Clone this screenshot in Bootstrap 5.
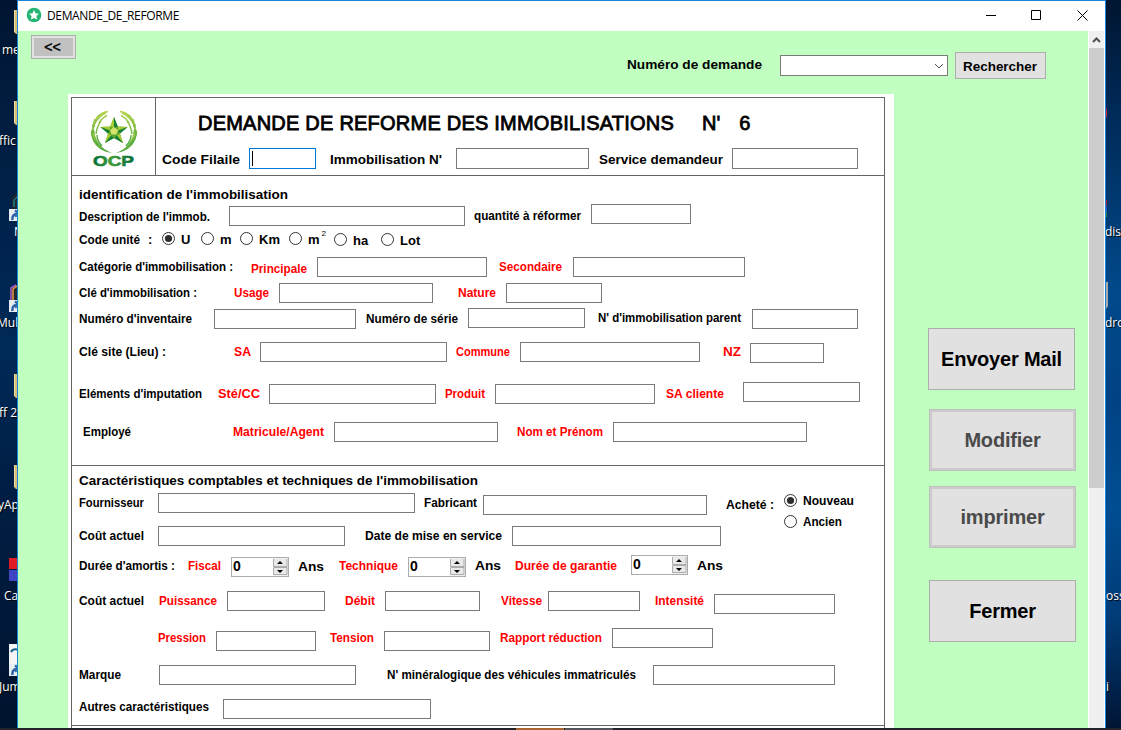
<!DOCTYPE html>
<html lang="fr">
<head>
<meta charset="utf-8">
<title>DEMANDE_DE_REFORME</title>
<link href="https://cdn.jsdelivr.net/npm/bootstrap@5.3.0/dist/css/bootstrap.min.css" rel="stylesheet">
<style>
body{height:730px;overflow:hidden;font-family:"Liberation Sans",Arial,sans-serif;font-size:13px;color:#000;background:#011b3d}
.app{height:728px;overflow:hidden}
.desk{position:relative;overflow:hidden;flex:none;color:#fff;font:12px/16px "Open Sans",sans-serif;text-shadow:1px 1px 1px #000}
.desk.west{width:17px;background:linear-gradient(#001531,#011e42 18%,#00244f 35%,#002a58 48%,#001f46 65%,#00132e)}
.desk.east{width:15px;background:linear-gradient(#001530,#002855 14%,#00498a 40%,#004384 55%,#004d92 70%,#003b76 85%,#001534)}
.desk span,.desk svg{position:absolute;white-space:nowrap}
.win{width:1089px;border:1px solid #1883d7;border-bottom:0;background:#fff}
.titlebar{height:30px;font:12px "Open Sans",sans-serif;padding:0 3px 2px 8px}
.titlebar svg{display:block}
.titlebar .fit{margin-left:5px}
.client{width:1070px;background:#c0ffc0;height:697px}
.topbar{height:63px}
.scroll{width:15px;margin-left:1px;background:#f0f0f0}
.thumb{height:440px;background:#cdcdcd}
.win-btn{border:1px solid #adadad;background:#e1e1e1;border-radius:0;color:#000;font-weight:700;padding:0}
.btn-back{width:45px;height:24px;margin:4px 0 0 13px;background:#c0c0c0;box-shadow:inset 0 0 0 2px #e1e1e1;font-size:14px;font-weight:400;-webkit-text-stroke:.5px #000;line-height:22px;padding-right:2px}
.search{margin:21px 42px 0 0}
.search .lbl{margin:3px 18px 0 0}
.btn-find{width:91px;height:27px;margin-left:7px;font-size:13px;line-height:27px;text-align:left;padding-left:7px}
.combo{width:168px;height:21px;margin-top:3px;border:1px solid #7a7a7a;background:#fff;padding:7px 3px 0 0}
.combo svg{display:block;margin-left:auto}
.actions .win-btn{width:147px;height:62px;font-size:20px;line-height:60px;margin-left:35px;letter-spacing:-.2px}
.actions .mail{margin:234px 0 19px 34px}
.actions .print{margin-top:15px}
.actions .quit{margin-top:32px}
.actions .off{color:#4a4a4a;border-color:#bfbfbf;box-shadow:inset 0 0 0 2px #ccc}
.sheet{width:826px;margin-left:50px;background:#fff;padding:3px}
.frame{width:814px;height:640px;border:1px solid #646464;border-bottom:0}
.head{height:78px;border-bottom:1px solid #646464}
.logo{width:84px;border-right:1px solid #646464;flex:none}
.logo svg{display:block;margin:9px 0 0 14px}
.big{font-size:20px;font-weight:400;-webkit-text-stroke:.8px #000;line-height:24px;margin:13px 0 0;padding-left:42px}
.big span{display:inline-block;white-space:nowrap}
.big .num{margin:0 19px 0 28px}
.lbl{display:block;font-weight:700;line-height:20px;height:20px;white-space:nowrap}
.lbl>span{display:inline-block}
.lbl .fit,.opt .fit,.win-btn .fit{transform-origin:0 50%}
.red{color:#f00}
.box{display:block;border:1px solid #7a7a7a;background:#fff;height:20px;border-radius:0;padding:0 2px;min-width:0;width:100%}
.tall{height:21px}
.box.active{border-color:#0078d7;padding:2px 0 0 2px}
.caret{width:1px;height:15px;background:#000}
.line{display:grid;align-items:start}
.sec1{height:290px;border-bottom:1px solid #646464;padding:9px 0 0 7px}
.sec2{height:260px;border-bottom:1px solid #646464;padding:5px 0 0 7px}
.d1{margin-top:1px}.d2{margin-top:2px}.d3{margin-top:3px}.u1{margin-top:-1px}.u2{margin-top:-2px}
.r-head{grid-template-columns:87px 67px 14px 126px 133px 10px 133px 126px;padding-left:6px;margin-top:13px}
.r-title{height:21px}.sec2 .r-title{height:22px}
.r-desc{grid-template-columns:150px 236px 9px 117px 100px;height:24px}
.r-unit{grid-template-columns:83px 39px 39px 49px 45px 47px 60px;height:27px}
.r-cat{grid-template-columns:172px 66px 170px 12px 74px 172px;height:26px}
.r-cle{grid-template-columns:155px 45px 154px 25px 48px 96px;height:26px}
.r-inv{grid-template-columns:135px 142px 10px 102px 117px 13px 154px 106px;height:33px}
.r-site{grid-template-columns:155px 26px 187px 9px 64px 180px 23px 27px 74px;height:42px}
.r-imp{grid-template-columns:139px 51px 167px 9px 50px 160px 11px 77px 117px;height:38px}
.r-emp{grid-template-columns:154px 101px 164px 19px 96px 194px;height:43px}
.r-four{grid-template-columns:79px 257px 9px 59px 224px 19px 58px 90px;height:33px}
.r-date{grid-template-columns:79px 187px 20px 147px 209px;height:30px}
.r-dur{grid-template-columns:109px 43px 58px 9px 41px 69px 58px 9px 40px 116px 57px 9px 40px;height:35px}
.r-puis{grid-template-columns:80px 68px 98px 20px 40px 95px 21px 47px 92px 15px 59px 121px;height:37px}
.r-pres{grid-template-columns:79px 58px 100px 14px 54px 106px 10px 112px 101px;height:37px}
.r-marq{grid-template-columns:80px 197px 31px 266px 182px;height:32px}
.r-autr{grid-template-columns:144px 208px}
.opt{display:flex;gap:6px;line-height:20px;font-weight:700}
.opt svg{flex:none;margin-top:2px}
.bought svg{margin-top:3px}
.sup{font-size:8px;font-weight:400;line-height:8px;margin:0 0 0 -4px}
.spin{display:flex;justify-content:space-between;height:20px;border:1px solid #ababb0;background:#fff;font-size:14px;font-weight:700;line-height:16px;padding-left:1px}
.taskbar{height:2px;background:#222427;padding-left:516px}
.taskbar i{width:48px;background:#a9672f;margin-right:1px}
.taskbar i+i{background:#55575b}
</style>
</head>
<body>
<svg width="0" height="0" class="position-absolute">
 <defs>
  <symbol id="on" viewBox="0 0 13 13"><circle cx="6.5" cy="6.5" r="6" fill="#fff" stroke="#333"/><circle cx="6.5" cy="6.5" r="3.6" fill="#2d2d2d"/></symbol>
  <symbol id="off" viewBox="0 0 13 13"><circle cx="6.5" cy="6.5" r="6" fill="#fff" stroke="#333"/></symbol>
  <symbol id="updown" viewBox="0 0 15 18"><path fill="#f0f0f0" d="M0 0h15v18H0z"/><path fill="#e9e9e9" stroke="#acacac" d="M.5 1v7.500h13.500V1M.5 10v6.500h13.500V10"/><path d="M.5 9.500h14" stroke="#acacac"/><path d="M7 3l3 3H4zM4 12h6l-3 3z"/></symbol>
  <symbol id="folder" viewBox="0 0 14 24"><path fill="#d8bd78" d="M1 0h13v24H3L1 22z"/><path fill="#f0dda0" d="M1 0h1v22H1z"/></symbol>
  <symbol id="arrow" viewBox="0 0 12 12"><path fill="#e8edf2" d="M0 0h12v12H0z"/><path fill="none" stroke="#2c62a6" stroke-width="2.500" d="M3.500 11c-.5-4 1-6 5-6M6 1.500l4 3-4 3"/></symbol>
 </defs>
</svg>
<div class="app d-flex">
 <div class="desk west">
  <svg style="left:13px;top:10px" width="14" height="24"><use href="#folder"/></svg><span style="left:2px;top:42px">me</span>
  <svg style="left:13px;top:101px" width="14" height="24"><use href="#folder"/></svg><span style="left:-1px;top:133px">ffic</span>
  <svg style="left:9px;top:191px" width="14" height="30" viewBox="0 0 14 30"><path d="M3 6l5-4v18H3z" fill="#23262b"/><path d="M5 16V9l3-3" stroke="#15a8b8" fill="none"/><svg y="18" width="12" height="12"><use href="#arrow"/></svg></svg><span style="left:14px;top:224px">N</span>
  <svg style="left:9px;top:282px" width="14" height="30" viewBox="0 0 14 30"><path d="M1 6l7-4v18H1z" fill="#23262b"/><path d="M2 18V6l5-3" stroke="#a05bd0" fill="none" stroke-width="1.500"/><path d="M4 18V7l4-3" stroke="#e79a3b" fill="none" stroke-width="1.500"/><svg y="18" width="12" height="12"><use href="#arrow"/></svg></svg><span style="left:-3px;top:315px">Mul</span>
  <svg style="left:13px;top:374px" width="14" height="24"><use href="#folder"/></svg><span style="left:-1px;top:405px">ff 20</span>
  <svg style="left:13px;top:465px" width="14" height="24"><use href="#folder"/></svg><span style="left:-2px;top:497px">yAp</span>
  <svg style="left:9px;top:558px" width="12" height="23"><path fill="#e01b24" d="M0 0h12v11H0z"/><path fill="#4044c4" d="M0 12h12v11H0z"/></svg><span style="left:4px;top:588px">Ca</span>
  <svg style="left:9px;top:644px" width="12" height="32"><path fill="#f4f4f4" d="M0 0h12v20H0z"/><path d="M2 8q2-4 8-2" stroke="#17618e" stroke-width="2" fill="none"/><svg y="20" width="12" height="12"><use href="#arrow"/></svg></svg><span style="left:-1px;top:679px">Jum</span>
 </div>
 <div class="win d-flex flex-column flex-shrink-0">
  <div class="titlebar d-flex align-items-center">
   <svg width="16" height="16" viewBox="0 0 16 16"><circle cx="8" cy="8" r="7.300" fill="#25b574"/><path fill="#fff" d="M8 3l1.500 3.300 3.500.4-2.600 2.400.7 3.500L8 10.900l-3.100 1.700.7-3.500L3 6.700l3.500-.4z"/></svg>
   <span class="fit" data-w="131">DEMANDE_DE_REFORME</span>
   <svg class="ms-auto" width="120" height="14" viewBox="0 0 120 14" fill="none" stroke="#000"><path d="M4 7.500h10M49.500 2.500h9v9h-9zM95.500 2.500l10 10M105.500 2.500l-10 10"/></svg>
  </div>
  <div class="d-flex">
   <div class="client">
    <div class="topbar d-flex align-items-start">
     <button class="btn win-btn btn-back">&lt;&lt;</button>
     <div class="search d-flex ms-auto">
      <span class="lbl"><span class="fit" data-w="135">Numéro de demande</span></span>
      <div class="combo"><svg width="10" height="6" fill="none" stroke="#555"><path d="M1 1l4 4 4-4"/></svg></div>
      <button class="btn win-btn btn-find"><span class="fit d-inline-block" data-w="74">Rechercher</span></button>
     </div>
    </div>
    <div class="d-flex">
     <div class="sheet">
      <div class="frame">
       <div class="head d-flex">
        <div class="logo">
         <svg width="56" height="64" viewBox="0 0 56 64">
          <defs><linearGradient id="g" x2="0" y2="1"><stop stop-color="#b4d24a"/><stop offset="1" stop-color="#45a53c"/></linearGradient><linearGradient id="t" x2="1" y2="0"><stop stop-color="#00703c"/><stop offset=".45" stop-color="#3f9c36"/><stop offset="1" stop-color="#086d39"/></linearGradient></defs>
          <g id="wreath">
           <path fill="url(#g)" d="M5.500 22C4 35 12 44 26 46 15 42 9 34 8 22z"/>
           <path fill="none" stroke="url(#g)" stroke-width="1.400" d="M6.500 28C6 18 12 9 20 6M7 17q-1 4 1 9M9 12q-2 4-.5 8M13 8q-4 4-3.500 8M22 4.500q-8 1-10 6M15 14q-4 5-5 13M21 8.500q-6 3-8 8M5.500 24q0 8 6.500 14M11 28q0 6 5 11"/>
          </g>
          <use href="#wreath" transform="matrix(-1 0 0 1 56 0)"/>
          <path fill="#5aa52e" d="M28 10l3.800 9.500 9.700.5-7.500 6.500 3 9.500-9-5-9 5 3-9.500-7.500-6.500 9.700-.5z"/>
          <path fill="#a8cc34" d="M28 10v11l-4-1.500zM41.500 20l-9 4-1-4.500zM14.500 20l10-.5-1 4zM22 26.500L19 36l6-8zM34 26.500L37 36l-9-5z"/>
          <path fill="#16803b" d="M28 10l3.800 9.500-3.800 1.500zM41.500 20L34 26.500l-2-3zM37 36l-9-5 3-2.500zM14.500 20l7.500 6.500 2-3zM19 36l9-5-3-2z"/>
          <path fill="#d5e36b" d="M28 20l4 3-1.500 4.500h-5L24 23z"/>
          <text x="7" y="59" textLength="41" lengthAdjust="spacingAndGlyphs" font-family="Liberation Sans" font-weight="700" font-size="15" fill="url(#t)" stroke="url(#t)" stroke-width=".6">OCP</text>
         </svg>
        </div>
        <div>
         <h1 class="big d-flex"><span class="fit" data-w="475">DEMANDE DE REFORME DES IMMOBILISATIONS</span><span class="num">N'</span><span>6</span></h1>
         <div class="line r-head">
          <span class="lbl d2"><span class="fit" data-w="78">Code Filaile</span></span><div class="box tall active"><div class="caret"></div></div><i></i>
          <span class="lbl d2"><span class="fit" data-w="112">Immobilisation N'</span></span><input class="box tall"><i></i>
          <span class="lbl d2"><span class="fit" data-w="124">Service demandeur</span></span><input class="box tall">
         </div>
        </div>
       </div>
       <div class="sec1">
        <div class="r-title"><span class="lbl"><span class="fit" data-w="209">identification de l'immobilisation</span></span></div>
        <div class="line r-desc"><span class="lbl d1"><span class="fit" data-w="131">Description de l'immob.</span></span><input class="box"><i></i><span class="lbl"><span class="fit" data-w="107">quantité à réformer</span></span><input class="box u2"></div>
        <div class="line r-unit"><span class="lbl"><span class="fit" data-w="61">Code unité</span><span class="ms-2">:</span></span>
         <label class="opt"><svg width="13" height="13"><use href="#on"/></svg>U</label>
         <label class="opt"><svg width="13" height="13"><use href="#off"/></svg>m</label>
         <label class="opt"><svg width="13" height="13"><use href="#off"/></svg>Km</label>
         <label class="opt"><svg width="13" height="13"><use href="#off"/></svg>m<span class="sup">2</span></label>
         <label class="opt d1"><svg width="13" height="13"><use href="#off"/></svg>ha</label>
         <label class="opt d1"><svg width="13" height="13"><use href="#off"/></svg>Lot</label></div>
        <div class="line r-cat"><span class="lbl"><span class="fit" data-w="154">Catégorie d'immobilisation :</span></span><span class="lbl red d2"><span class="fit" data-w="56">Principale</span></span><input class="box"><i></i><span class="lbl red"><span class="fit" data-w="63">Secondaire</span></span><input class="box"></div>
        <div class="line r-cle"><span class="lbl"><span class="fit" data-w="118">Clé d'immobilisation :</span></span><span class="lbl red"><span class="fit" data-w="35">Usage</span></span><input class="box"><i></i><span class="lbl red"><span class="fit" data-w="38">Nature</span></span><input class="box"></div>
        <div class="line r-inv"><span class="lbl"><span class="fit" data-w="113">Numéro d'inventaire</span></span><input class="box"><i></i><span class="lbl"><span class="fit" data-w="92">Numéro de série</span></span><input class="box u1"><i></i><span class="lbl u1"><span class="fit" data-w="143">N' d'immobilisation parent</span></span><input class="box"></div>
        <div class="line r-site"><span class="lbl"><span class="fit" data-w="87">Clé site (Lieu) :</span></span><span class="lbl red"><span class="fit" data-w="17">SA</span></span><input class="box"><i></i><span class="lbl red"><span class="fit" data-w="54">Commune</span></span><input class="box"><i></i><span class="lbl red"><span class="fit" data-w="18">NZ</span></span><input class="box d1"></div>
        <div class="line r-imp"><span class="lbl"><span class="fit" data-w="123">Eléments d'imputation</span></span><span class="lbl red"><span class="fit" data-w="42">Sté/CC</span></span><input class="box"><i></i><span class="lbl red"><span class="fit" data-w="40">Produit</span></span><input class="box"><i></i><span class="lbl red"><span class="fit" data-w="58">SA cliente</span></span><input class="box u2"></div>
        <div class="line r-emp"><span class="lbl ps-1"><span class="fit" data-w="48">Employé</span></span><span class="lbl red"><span class="fit" data-w="91">Matricule/Agent</span></span><input class="box"><i></i><span class="lbl red"><span class="fit" data-w="86">Nom et Prénom</span></span><input class="box"></div>
       </div>
       <div class="sec2">
        <div class="r-title"><span class="lbl"><span class="fit" data-w="399">Caractéristiques comptables et techniques de l'immobilisation</span></span></div>
        <div class="line r-four"><span class="lbl"><span class="fit" data-w="65">Fournisseur</span></span><input class="box"><i></i><span class="lbl"><span class="fit" data-w="53">Fabricant</span></span><input class="box d2"><i></i><span class="lbl d2"><span class="fit" data-w="48">Acheté :</span></span>
         <div class="u2 bought"><label class="opt"><svg width="13" height="13"><use href="#on"/></svg><span class="fit" data-w="51">Nouveau</span></label><label class="opt d1"><svg width="13" height="13"><use href="#off"/></svg><span class="fit" data-w="39">Ancien</span></label></div></div>
        <div class="line r-date"><span class="lbl"><span class="fit" data-w="65">Coût actuel</span></span><input class="box"><i></i><span class="lbl"><span class="fit" data-w="137">Date de mise en service</span></span><input class="box"></div>
        <div class="line r-dur"><span class="lbl"><span class="fit" data-w="96">Durée d'amortis :</span></span><span class="lbl red"><span class="fit" data-w="33">Fiscal</span></span><div class="spin d1">0<svg width="15" height="18"><use href="#updown"/></svg></div><i></i><span class="lbl d1"><span class="fit" data-w="26">Ans</span></span>
         <span class="lbl red"><span class="fit" data-w="59">Technique</span></span><div class="spin d1">0<svg width="15" height="18"><use href="#updown"/></svg></div><i></i><span class="lbl"><span class="fit" data-w="26">Ans</span></span>
         <span class="lbl red"><span class="fit" data-w="102">Durée de garantie</span></span><div class="spin u1">0<svg width="15" height="18"><use href="#updown"/></svg></div><i></i><span class="lbl"><span class="fit" data-w="26">Ans</span></span></div>
        <div class="line r-puis"><span class="lbl"><span class="fit" data-w="65">Coût actuel</span></span><span class="lbl red"><span class="fit" data-w="58">Puissance</span></span><input class="box"><i></i><span class="lbl red"><span class="fit" data-w="30">Débit</span></span><input class="box"><i></i><span class="lbl red"><span class="fit" data-w="41">Vitesse</span></span><input class="box"><i></i><span class="lbl red"><span class="fit" data-w="49">Intensité</span></span><input class="box d3"></div>
        <div class="line r-pres"><i></i><span class="lbl red"><span class="fit" data-w="48">Pression</span></span><input class="box d3"><i></i><span class="lbl red"><span class="fit" data-w="44">Tension</span></span><input class="box d3"><i></i><span class="lbl red"><span class="fit" data-w="102">Rapport réduction</span></span><input class="box"></div>
        <div class="line r-marq"><span class="lbl"><span class="fit" data-w="42">Marque</span></span><input class="box"><i></i><span class="lbl"><span class="fit" data-w="249">N' minéralogique des véhicules immatriculés</span></span><input class="box"></div>
        <div class="line r-autr"><span class="lbl"><span class="fit" data-w="130">Autres caractéristiques</span></span><input class="box d2"></div>
       </div>
      </div>
     </div>
     <div class="actions d-flex flex-column">
      <button class="btn win-btn mail">Envoyer Mail</button>
      <button class="btn win-btn off">Modifier</button>
      <button class="btn win-btn off print">imprimer</button>
      <button class="btn win-btn quit">Fermer</button>
     </div>
    </div>
   </div>
   <div class="scroll">
    <svg class="d-block" width="15" height="17" fill="none" stroke="#505050" stroke-width="2"><path d="M4 11l3.500-3.500L11 11"/></svg>
    <div class="thumb"></div>
   </div>
  </div>
 </div>
 <div class="desk east">
  <svg style="left:0;top:107px" width="2" height="14"><path d="M0 0q2 7 0 12z" fill="#f02a30"/></svg>
  <svg style="left:0;top:200px" width="2" height="18"><path fill="#a02040" d="M0 0h1v6H0z"/><path fill="#2456c8" d="M0 6h1v6H0z"/><path fill="#2a8a3a" d="M0 12h1v5H0z"/></svg><span style="left:-1px;top:224px">dist</span>
  <svg style="left:0;top:282px" width="2" height="28"><path fill="#aaa" d="M0 0h2v24l-2 3z"/></svg><span style="left:-1px;top:315px">dro</span>
  <span style="left:0;top:588px">oss</span><span style="left:0;top:679px">i</span>
 </div>
</div>
<div class="taskbar d-flex"><i></i><i></i></div>
<script src="https://cdn.jsdelivr.net/npm/bootstrap@5.3.0/dist/js/bootstrap.bundle.min.js"></script>
<script>
// Stretches each form caption to the width given in data-w; window and page titles are tracked instead.
document.querySelectorAll('.fit').forEach(function (el) {
  var w = Number(el.dataset.w), r = document.createRange();
  r.selectNodeContents(el);
  var natural = r.getBoundingClientRect().width;
  if (el.closest('.big, .titlebar')) {
    el.style.letterSpacing = ((w + 1 - natural) / el.textContent.length).toFixed(3) + 'px';
  } else {
    el.style.transform = 'scaleX(' + (w / natural).toFixed(4) + ')';
    el.style.marginRight = (w - natural).toFixed(2) + 'px';
  }
});
</script>
</body>
</html>
